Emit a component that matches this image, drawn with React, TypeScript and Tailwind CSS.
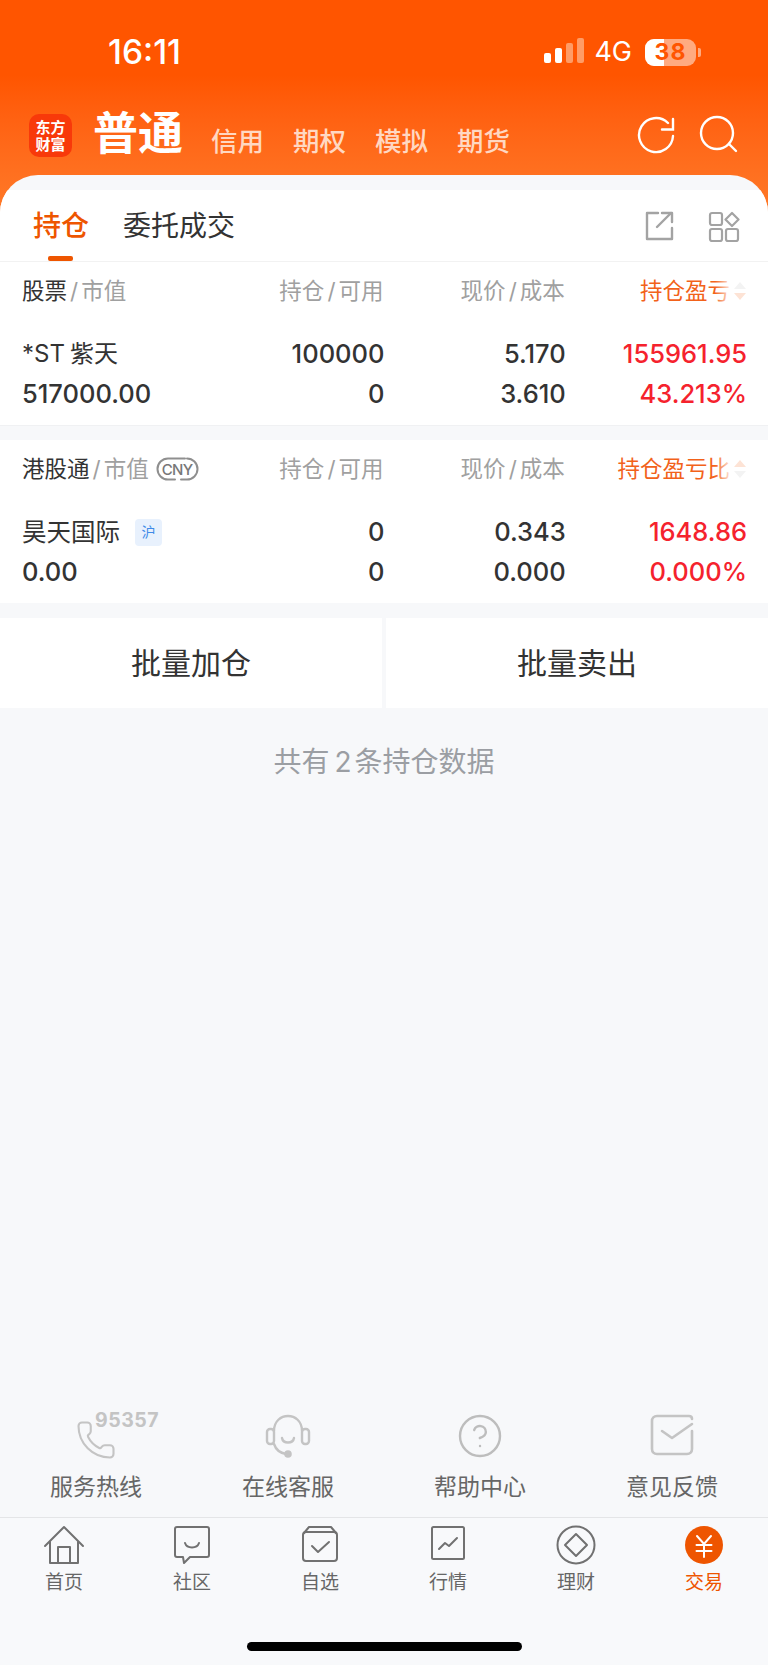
import { CircleHelp, Phone } from "lucide-react";

const FONT = "font-['Inter','Noto_Sans_CJK_SC',sans-serif]";

type Cell = { top: string; bottom: string };

function SortArrows({ active }: { active: "up" | "down" }) {
  return (
    <svg width="14" height="26" viewBox="0 0 14 26" className="absolute right-0 top-1/2 -translate-y-1/2">
      <path d="M7 4 L13 11 H1 Z" fill={active === "up" ? "#fde3d5" : "#f3f3f3"} />
      <path d="M7 22 L13 15 H1 Z" fill={active === "down" ? "#fde3d5" : "#f3f3f3"} />
    </svg>
  );
}

function ColumnHead({ a, b }: { a: string; b: string }) {
  return (
    <div className="pr-[1px] text-right text-[22.5px] leading-[30px] text-[#a0a0a0]">
      {a}
      <span className="mx-[3px]">/</span>
      {b}
    </div>
  );
}

function SortHead({ label, active }: { label: string; active: "up" | "down" }) {
  return (
    <div className="relative flex justify-end overflow-hidden whitespace-nowrap pr-[17px] text-[22.5px] leading-[30px] text-[#f2621a]">
      <span>{label}</span>
      <div className="absolute right-[14px] top-0 h-full w-[18px] bg-gradient-to-r from-white/0 to-white" />
      <div className="absolute right-0 top-0 h-full w-[15px] bg-white" />
      <SortArrows active={active} />
    </div>
  );
}

function Section({
  head,
  sortLabel,
  active,
  name,
  value,
  cells,
  profit,
}: {
  head: React.ReactNode;
  sortLabel: string;
  active: "up" | "down";
  name: React.ReactNode;
  value: string;
  cells: Cell[];
  profit: Cell;
}) {
  return (
    <section className="bg-white pl-[22px] pr-[21px] pb-[11px]">
      <div className="grid h-[58px] grid-cols-4 items-center">
        {head}
        <ColumnHead a="持仓" b="可用" />
        <ColumnHead a="现价" b="成本" />
        <SortHead label={sortLabel} active={active} />
      </div>
      <div className="mt-[14px] grid grid-cols-4 text-[25.5px] font-medium leading-[40px] text-[#333333]">
        <div>
          <div className="flex h-[40px] items-center text-[24px] font-normal">{name}</div>
          <div>{value}</div>
        </div>
        {cells.map((c, i) => (
          <div key={i} className="text-right">
            <div>{c.top}</div>
            <div>{c.bottom}</div>
          </div>
        ))}
        <div className="text-right text-[#f5222d]">
          <div>{profit.top}</div>
          <div>{profit.bottom}</div>
        </div>
      </div>
    </section>
  );
}

function StatusBar() {
  return (
    <div className="flex h-[100px] items-start pt-[32px] text-white">
      <div className="ml-[108px] text-[33.5px] font-medium leading-[40px]">16:11</div>
      <div className="ml-auto mr-[67px] flex h-[40px] items-center">
        <svg width="40" height="26" viewBox="0 0 40 26" className="mr-[10px] -mt-[2px]">
          <rect x="0" y="15" width="7" height="10" rx="2" fill="#fff" />
          <rect x="11" y="10" width="7" height="15" rx="2" fill="#fff" />
          <rect x="22" y="5" width="7" height="20" rx="2" fill="#ff9c66" />
          <rect x="33" y="0" width="7" height="25" rx="2" fill="#ff9c66" />
        </svg>
        <span className="text-[27px] leading-[30px]">4G</span>
        <div className="relative ml-[13px] h-[27px] w-[51px] overflow-hidden rounded-[9px] bg-[#ffaa80]">
          <div className="h-full w-[19px] bg-white" />
          <span className="absolute inset-0 text-center text-[23px] font-bold leading-[27px] tracking-[1px] text-[#ff5500]">
            38
          </span>
        </div>
        <div className="ml-[2px] h-[9px] w-[3px] rounded-r-[2px] bg-[#ffaa80]" />
      </div>
    </div>
  );
}

function NavBar() {
  return (
    <div className="flex h-[75px] items-center text-white">
      <div className="ml-[29px] -mt-[4px] flex h-[43px] w-[43px] flex-col items-center justify-center rounded-[10px] bg-[#f8390a] text-[15px] font-bold leading-[17px]">
        <span>东方</span>
        <span>财富</span>
      </div>
      <div className="ml-[21px] -mt-[8px] text-[45px] font-bold leading-[50px]">普通</div>
      <div className="ml-[28px] mt-[7px] flex gap-[29px] text-[26.5px] font-medium leading-[32px] text-[#ffd8c2]">
        <span>信用</span>
        <span>期权</span>
        <span>模拟</span>
        <span>期货</span>
      </div>
      <svg width="40" height="40" viewBox="0 0 40 40" className="ml-auto mr-[22px] -mt-[6px]" fill="none" stroke="#fff" strokeWidth="2.4" strokeLinecap="round">
        <path d="M36 21 A17 17 0 1 1 31 8" />
        <path d="M36 4 V14.5 H25" />
      </svg>
      <svg width="40" height="40" viewBox="0 0 40 40" className="mr-[29px] -mt-[6px]" fill="none" stroke="#fff" strokeWidth="2.4" strokeLinecap="round">
        <circle cx="18" cy="18" r="16" />
        <path d="M30 29 L37 36" />
      </svg>
    </div>
  );
}

function TabBarHeader() {
  return (
    <div className="flex h-[72px] items-start border-b border-[#f2f2f2] bg-white">
      <div className="relative ml-[33px] mt-[17px] text-[28px] font-medium leading-[38px] text-[#ee5500]">
        持仓
        <div className="absolute left-[15px] top-[49px] h-[5px] w-[25px] rounded-[2px] bg-[#ee5500]" />
      </div>
      <div className="ml-[34px] mt-[17px] text-[28px] leading-[38px] text-[#333333]">委托成交</div>
      <svg width="30" height="30" viewBox="0 0 30 30" className="ml-auto mr-[34px] mt-[21px]" fill="none" stroke="#a3a3a3" strokeWidth="2.4" strokeLinecap="round" strokeLinejoin="round">
        <path d="M14 2 H3 V28 H28 V17" />
        <path d="M13 16 L27 2" />
        <path d="M18 2 H28 V11" />
      </svg>
      <svg width="32" height="32" viewBox="0 0 32 32" className="mr-[28px] mt-[21px]" fill="none" stroke="#a3a3a3" strokeWidth="2.2" strokeLinejoin="round">
        <rect x="2" y="2" width="12" height="12" rx="2" />
        <rect x="2" y="18" width="12" height="12" rx="2" />
        <rect x="18" y="18" width="12" height="12" rx="2" />
        <path d="M24 2 L30.5 8.5 L24 15 L17.5 8.5 Z" />
      </svg>
    </div>
  );
}

/* Currency tag: two open arcs around the CNY label */
function CnyTag() {
  return (
    <span className="relative ml-[7px] flex h-[24px] w-[43px] items-center justify-center text-[15px] font-medium leading-none tracking-[-0.6px] text-[#777777]">
      <svg width="43" height="24" viewBox="0 0 43 24" className="absolute inset-0" fill="none" stroke="#8f8f8f" strokeWidth="2" strokeLinecap="round">
        <path d="M29 1.5 H12 A10.5 10.5 0 0 0 12 22.5 H19" />
        <path d="M25 22.5 H31 A10.5 10.5 0 0 0 31 1.5" />
      </svg>
      <span className="relative">CNY</span>
    </span>
  );
}

function Headset() {
  return (
    <svg width="48" height="48" viewBox="0 0 48 48" fill="none" stroke="#c4c4c4" strokeWidth="2.4" strokeLinecap="round">
      <path d="M10 19 C10 -1 38 -1 38 19" />
      <rect x="3" y="17" width="7" height="15" rx="3" />
      <rect x="38" y="17" width="7" height="15" rx="3" />
      <path d="M10 32 C12 38 16 41 22 42" />
      <path d="M18 26 C19 32 29 32 30 26" />
      <circle cx="24" cy="42" r="2.6" fill="#c4c4c4" />
    </svg>
  );
}

function Feedback() {
  return (
    <svg width="48" height="48" viewBox="0 0 48 48" fill="none" stroke="#c4c4c4" strokeWidth="2.6" strokeLinecap="round" strokeLinejoin="round">
      <path d="M44 7 C44 5 43 4 41 4 H9 C6 4 4 6 4 9 V37 C4 40 6 42 9 42 H39 C42 42 44 40 44 37 V19" />
      <path d="M14 19 L24 26 L44 12" />
    </svg>
  );
}

function HomeIcon() {
  return (
    <svg width="42" height="40" viewBox="0 0 42 40" fill="none" stroke="#717171" strokeWidth="2" strokeLinejoin="round" strokeLinecap="round">
      <path d="M2 21 L21 2 L40 21" />
      <path d="M7 17 V38 H35 V17" />
      <path d="M15 38 V22 H27 V38" />
    </svg>
  );
}

function ChatIcon() {
  return (
    <svg width="38" height="40" viewBox="0 0 38 40" fill="none" stroke="#717171" strokeWidth="2" strokeLinejoin="round" strokeLinecap="round">
      <path d="M4 2 H34 Q36 2 36 4 V30 Q36 32 34 32 H17 L11 38 L10 32 H4 Q2 32 2 30 V4 Q2 2 4 2 Z" />
      <path d="M12 18 C14 24 24 24 26 18" />
    </svg>
  );
}

function WatchIcon() {
  return (
    <svg width="38" height="40" viewBox="0 0 38 40" fill="none" stroke="#717171" strokeWidth="2" strokeLinejoin="round" strokeLinecap="round">
      <rect x="2" y="7" width="34" height="29" rx="3" />
      <path d="M3 8 L8 2 H30 L35 8" />
      <path d="M11 21 L17 27 L28 17" />
    </svg>
  );
}

function ChartIcon() {
  return (
    <svg width="38" height="40" viewBox="0 0 38 40" fill="none" stroke="#717171" strokeWidth="2" strokeLinejoin="round" strokeLinecap="round">
      <rect x="3" y="2" width="32" height="32" rx="1.5" />
      <path d="M10 24 L16 18 L20 21 L28 13" />
    </svg>
  );
}

function WealthIcon() {
  return (
    <svg width="42" height="40" viewBox="0 0 42 40" fill="none" stroke="#717171" strokeWidth="2" strokeLinejoin="round">
      <circle cx="21" cy="20" r="18.5" />
      <path d="M21 9 L32 20 L21 31 L10 20 Z" />
    </svg>
  );
}

function TradeIcon() {
  return (
    <svg width="42" height="40" viewBox="0 0 42 40" fill="none">
      <circle cx="21" cy="20" r="19" fill="#ee5500" />
      <path d="M14 11 L21 19 L28 11 M13.5 20 H28.5 M13.5 26 H28.5 M21 19 V32" stroke="#fff" strokeWidth="2" strokeLinecap="round" />
    </svg>
  );
}

const services = [
  {
    label: "服务热线",
    icon: <Phone size={42} strokeWidth={1.2} color="#c4c4c4" className="mt-[8px]" />,
    badge: "95357",
  },
  { label: "在线客服", icon: <Headset /> },
  { label: "帮助中心", icon: <CircleHelp size={48} strokeWidth={1.2} color="#bdbdbd" /> },
  { label: "意见反馈", icon: <Feedback /> },
];

const tabs = [
  { label: "首页", icon: <HomeIcon /> },
  { label: "社区", icon: <ChatIcon /> },
  { label: "自选", icon: <WatchIcon /> },
  { label: "行情", icon: <ChartIcon /> },
  { label: "理财", icon: <WealthIcon /> },
  { label: "交易", icon: <TradeIcon />, active: true },
];

export default function App() {
  return (
    <div className={`${FONT} flex h-[1665px] w-[768px] flex-col overflow-hidden bg-[#f7f8fa]`}>
      <header className="h-[215px] shrink-0 bg-gradient-to-b from-[#ff5500] from-[35%] to-[#ff7a28]">
        <StatusBar />
        <NavBar />
      </header>

      <main className="-mt-[40px] flex flex-1 flex-col overflow-hidden rounded-t-[38px] bg-[#f7f8fa] pt-[15px]">
        <TabBarHeader />
        <Section
          head={
            <div className="whitespace-nowrap text-[22.5px] leading-[30px] text-[#333333]">
              股票<span className="mx-[3px] text-[#a0a0a0]">/</span>
              <span className="text-[#a0a0a0]">市值</span>
            </div>
          }
          sortLabel="持仓盈亏"
          active="down"
          name={
            <>
              <span>*ST</span>
              <span className="ml-[5px]">紫天</span>
            </>
          }
          value="517000.00"
          cells={[
            { top: "100000", bottom: "0" },
            { top: "5.170", bottom: "3.610" },
          ]}
          profit={{ top: "155961.95", bottom: "43.213%" }}
        />
        <div className="h-[15px] shrink-0 border-t border-[#f0f1f3]" />
        <Section
          head={
            <div className="flex items-center whitespace-nowrap text-[22.5px] leading-[30px] text-[#333333]">
              港股通<span className="mx-[3px] text-[#a0a0a0]">/</span>
              <span className="text-[#a0a0a0]">市值</span>
              <CnyTag />
            </div>
          }
          sortLabel="持仓盈亏比"
          active="up"
          name={
            <>
              <span className="text-[24.5px]">昊天国际</span>
              <span className="ml-[15px] flex h-[27px] w-[27px] items-center justify-center rounded-[4px] bg-[#e8f1fd] text-[14px] text-[#3f8be8]">
                沪
              </span>
            </>
          }
          value="0.00"
          cells={[
            { top: "0", bottom: "0" },
            { top: "0.343", bottom: "0.000" },
          ]}
          profit={{ top: "1648.86", bottom: "0.000%" }}
        />
        <div className="h-[15px] shrink-0" />

        <div className="flex h-[90px] shrink-0 gap-[4px] text-[30px] leading-[40px] text-[#333333]">
          <button className="flex-1 bg-white">批量加仓</button>
          <button className="flex-1 bg-white">批量卖出</button>
        </div>

        <p className="mt-[35px] text-center text-[28px] leading-[38px] text-[#9b9ea3]">
          共有<span className="ml-[5px] mr-[3px]">2</span>条持仓数据
        </p>

        <div className="mt-auto grid grid-cols-4 pb-[15px]">
          {services.map((s) => (
            <div key={s.label} className="flex flex-col items-center">
              <div className="relative flex h-[48px] w-[48px] items-center justify-center">
                {s.icon}
                {s.badge && (
                  <span className="absolute -top-[3px] left-[23px] text-[19.5px] font-bold leading-[22px] tracking-[0.5px] text-[#c4c4c4]">
                    {s.badge}
                  </span>
                )}
              </div>
              <span className="mt-[12px] text-[23px] leading-[30px] text-[#666666]">{s.label}</span>
            </div>
          ))}
        </div>
      </main>

      <nav className="h-[148px] shrink-0 border-t border-[#e4e5e7] bg-[#f8f9fb]">
        <div className="grid grid-cols-6 pt-[7px]">
          {tabs.map((t) => (
            <div key={t.label} className="flex flex-col items-center">
              <div className="flex h-[40px] items-center justify-center">{t.icon}</div>
              <span
                className={`mt-[5px] text-[19px] leading-[26px] ${t.active ? "text-[#ee5500]" : "text-[#666666]"}`}
              >
                {t.label}
              </span>
            </div>
          ))}
        </div>
        <div className="mx-auto mt-[46px] h-[9px] w-[275px] rounded-full bg-black" />
      </nav>
    </div>
  );
}
